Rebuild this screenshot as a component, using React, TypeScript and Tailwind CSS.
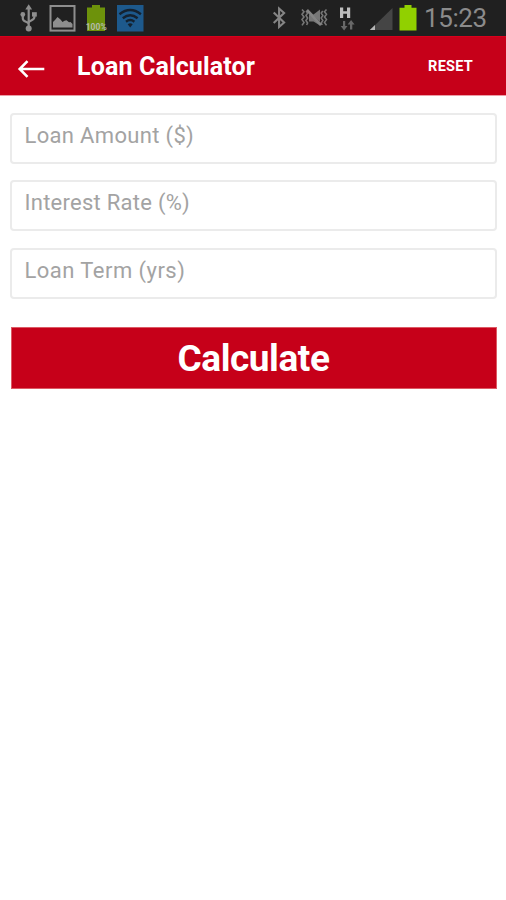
import { useState } from "react";

type Field = {
  id: string;
  label: string;
  className: string;
};

const fields: Field[] = [
  { id: "amount", label: "Loan Amount ($)", className: "mb-4 tracking-[0.33px]" },
  { id: "rate", label: "Interest Rate (%)", className: "mb-[17px] tracking-[0.26px]" },
  { id: "term", label: "Loan Term (yrs)", className: "mb-7 tracking-[0.46px]" },
];

function UsbIcon() {
  return (
    <svg className="ml-5 h-9 w-[18px]" viewBox="20 0 18 36" fill="none" stroke="#8e8e8e" strokeWidth="2.2">
      <path d="M28.7 7v20M28.7 24.5c0-3.5-5.9-2-5.9-6v-4M28.7 23c0-3 5.7-2 5.7-6v-2.5" />
      <path d="M28.7 4.2l3.4 5.2h-6.8z" fill="#8e8e8e" stroke="none" />
      <circle cx="22.8" cy="14.5" r="2.4" fill="#8e8e8e" stroke="none" />
      <rect x="32" y="12.2" width="4.8" height="4.4" fill="#8e8e8e" stroke="none" />
      <circle cx="28.7" cy="28.5" r="3" fill="#8e8e8e" stroke="none" />
    </svg>
  );
}

function PictureIcon() {
  return (
    <svg className="ml-[11px] h-9 w-[27px]" viewBox="49 0 27 36">
      <rect x="50.5" y="6" width="24" height="24.6" fill="#202020" stroke="#8e8e8e" strokeWidth="2" />
      <path d="M53 27.5v-5.5l2-2 2.5-3 3 2.5 2 2.5 2-1.2 2-.6 2.5 2 1.5-.2 2 2v3.5z" fill="#8e8e8e" />
    </svg>
  );
}

function FullBatteryIcon() {
  return (
    <svg className="ml-2 h-9 w-[25px]" viewBox="84 0 25 36">
      <path d="M92 5h8v2.5h5V31H87V7.5h5z" fill="#6d920b" />
      <text
        x="96.2"
        y="30.4"
        textAnchor="middle"
        textLength="21"
        fill="#b4baa8"
        fontSize="8.5"
        fontWeight="700"
        fontFamily="Roboto, sans-serif"
      >
        100%
      </text>
    </svg>
  );
}

function WifiTileIcon() {
  return (
    <svg className="ml-2 h-9 w-[27px]" viewBox="117 0 27 36">
      <rect x="117" y="5" width="26.5" height="26.5" fill="#1d598c" />
      <g fill="none" stroke="#142230" strokeWidth="2.4">
        <path d="M119.5 14.2q10.7-8.4 21.4 0" />
        <path d="M122.8 18.2q7.4-6 14.8 0" />
        <path d="M126 21.8q4.2-3.4 8.4 0" />
      </g>
      <path d="M127.7 24.2q2.5-1.7 5 0l-2.5 3.3z" fill="#142230" />
    </svg>
  );
}

function BluetoothIcon() {
  return (
    <svg className="h-9 w-[14px]" viewBox="272 0 14 36" fill="none" stroke="#858585" strokeWidth="2.1">
      <path d="M273.7 12.5l10.4 10-5 4.5V8.5l5 4.5-10.4 10" />
    </svg>
  );
}

function VibrateIcon() {
  return (
    <svg className="ml-[15px] h-9 w-[27px]" viewBox="301 0 27 36" fill="none" stroke="#777" strokeWidth="1.6">
      <path d="M302 9.5l2 2.2-2 2.6 2 2.7-2 2.6 2 2.8-2 3M306 11l1.6 2-1.6 2.5 1.6 2.5-1.6 2.5 1.6 2.5-1 2" />
      <path d="M326.5 9.5l-2 2.2 2 2.6-2 2.7 2 2.6-2 2.8 2 3M322.8 11l-1.6 2 1.6 2.5-1.6 2.5 1.6 2.5-1.6 2.5 1 2" />
      <path d="M309 14.5h4.5l6.5-5v16l-6.5-4H309z" fill="#777" stroke="none" />
      <path d="M309 12.5l11.5 10.5" stroke="#202020" strokeWidth="1.4" />
      <path d="M307 10l14 15" stroke="#858585" strokeWidth="2.6" />
    </svg>
  );
}

function DataIcon() {
  return (
    <svg className="ml-[10px] h-9 w-[17px]" viewBox="338 0 17 36">
      <path d="M340 7.4h3.2v3.9h3.8V7.4h3.2v10.6H347v-4.2h-3.8V18H340z" fill="#bebebe" />
      <path d="M343 21h2.2v5h2.3l-3.4 4.5-3.4-4.5h2.3z" fill="#686868" />
      <path d="M350 29.5v-5h-2.4l3.5-4.5 3.5 4.5h-2.3v5z" fill="#686868" />
    </svg>
  );
}

function SignalIcon() {
  return (
    <svg className="ml-[14px] h-9 w-[24px]" viewBox="369 0 24 36">
      <path d="M392.5 8v22H370z" fill="#454545" />
      <path d="M375 25v5h-5.2z" fill="#b5b5b5" />
    </svg>
  );
}

function BatteryIcon() {
  return (
    <svg className="ml-[6px] h-9 w-[19px]" viewBox="399 0 19 36">
      <path d="M404.5 5h7v2.7h5V30.5h-17V7.7h5z" fill="#91d000" />
    </svg>
  );
}

function BackArrow() {
  return (
    <svg className="h-5 w-7" viewBox="0 0 28 20" fill="none" stroke="#fff" strokeWidth="2.6">
      <path d="M27.3 10H3.5M10.5 2.2L2.7 10l7.8 7.8" />
    </svg>
  );
}

function StatusBar() {
  return (
    <div className="flex h-9 items-center bg-[#202020]">
      <UsbIcon />
      <PictureIcon />
      <FullBatteryIcon />
      <WifiTileIcon />
      <div className="ml-auto flex items-center">
        <BluetoothIcon />
        <VibrateIcon />
        <DataIcon />
        <SignalIcon />
        <BatteryIcon />
        <span className="ml-[6px] w-[82px] text-[26px] leading-9 tracking-[-0.4px] text-[#8b8b8b]">15:23</span>
      </div>
    </div>
  );
}

export default function App() {
  const [values, setValues] = useState<Record<string, string>>({});

  return (
    <div className="min-h-[900px] w-full bg-white font-[Roboto,sans-serif]">
      <StatusBar />
      <header className="flex h-[60px] items-center border-t border-b border-t-[#d9001c] border-b-[#ec9ca6] bg-[#c60019] text-white">
        <button type="button" aria-label="Back" className="mt-[6px] ml-[17px]">
          <BackArrow />
        </button>
        <h1 className="mt-[2px] ml-8 text-[25px] leading-[30px] font-bold tracking-[0.13px] whitespace-nowrap">
          Loan Calculator
        </h1>
        <button
          type="button"
          className="mt-px mr-[33px] ml-auto text-[14.5px] leading-5 font-bold tracking-[0.25px]"
          onClick={() => setValues({})}
        >
          RESET
        </button>
      </header>
      <form className="flex flex-col pt-[17px] pr-[9px] pl-[10px]" onSubmit={(e) => e.preventDefault()}>
        {fields.map((field) => (
          <input
            key={field.id}
            aria-label={field.label}
            placeholder={field.label}
            value={values[field.id] ?? ""}
            onChange={(e) => setValues({ ...values, [field.id]: e.target.value })}
            className={`${field.className} h-[51px] rounded-[4px] border-2 border-[#ebebeb] px-[12.5px] pb-[6px] text-[22px] text-[#555] outline-none placeholder:text-[#a3a3a3]`}
          />
        ))}
        <button
          type="submit"
          className="h-[62px] w-[486px] self-end border border-[#dc5a65] bg-[#c60019] pt-[2px] pr-px text-[37px] leading-[58px] font-bold tracking-[-0.45px] text-white"
        >
          Calculate
        </button>
      </form>
    </div>
  );
}
